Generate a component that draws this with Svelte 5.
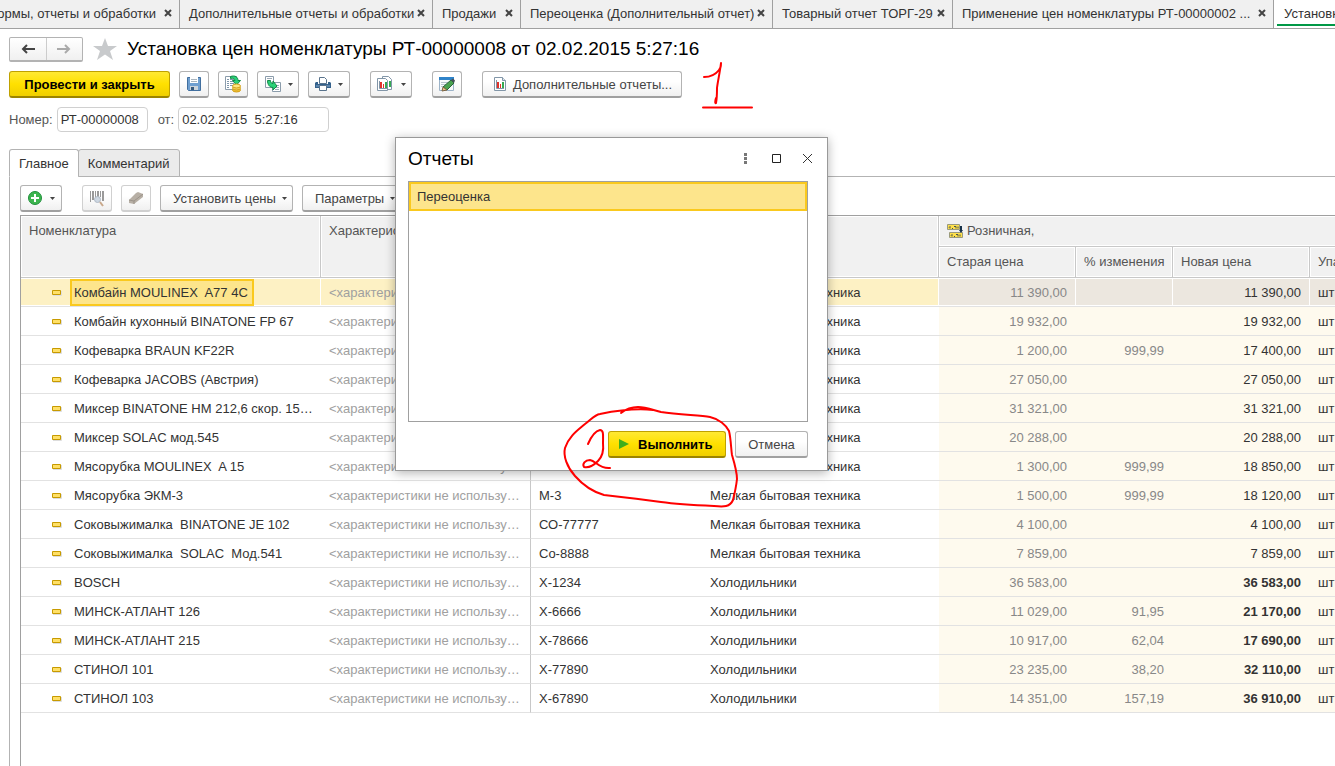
<script lang="ts">
	interface Item {
		name: string;
		code: string;
		group: string;
		oldPrice: string;
		change?: string;
		newPrice: string;
		bold?: boolean;
	}

	const tabs = [
		{ title: 'Печатные формы, отчеты и обработки', width: 180 },
		{ title: 'Дополнительные отчеты и обработки', width: 253 },
		{ title: 'Продажи', width: 88 },
		{ title: 'Переоценка (Дополнительный отчет)', width: 252 },
		{ title: 'Товарный отчет ТОРГ-29', width: 180 },
		{ title: 'Применение цен номенклатуры РТ-00000002 ...', width: 321 }
	];

	const small = 'Мелкая бытовая техника';
	const fridge = 'Холодильники';

	const items: Item[] = [
		{ name: 'Комбайн MOULINEX  A77 4C', code: 'М-77', group: small, oldPrice: '11 390,00', newPrice: '11 390,00' },
		{ name: 'Комбайн кухонный BINATONE FP 67', code: 'FP-67', group: small, oldPrice: '19 932,00', newPrice: '19 932,00' },
		{ name: 'Кофеварка BRAUN KF22R', code: 'KF22R', group: small, oldPrice: '1 200,00', change: '999,99', newPrice: '17 400,00' },
		{ name: 'Кофеварка JACOBS (Австрия)', code: 'J-1', group: small, oldPrice: '27 050,00', newPrice: '27 050,00' },
		{ name: 'Миксер BINATONE HM 212,6 скор. 150 Вт', code: 'HM-212', group: small, oldPrice: '31 321,00', newPrice: '31 321,00' },
		{ name: 'Миксер SOLAC мод.545', code: 'S-545', group: small, oldPrice: '20 288,00', newPrice: '20 288,00' },
		{ name: 'Мясорубка MOULINEX  A 15', code: 'А-15', group: small, oldPrice: '1 300,00', change: '999,99', newPrice: '18 850,00' },
		{ name: 'Мясорубка ЭКМ-3', code: 'М-3', group: small, oldPrice: '1 500,00', change: '999,99', newPrice: '18 120,00' },
		{ name: 'Соковыжималка  BINATONE JE 102', code: 'СО-77777', group: small, oldPrice: '4 100,00', newPrice: '4 100,00' },
		{ name: 'Соковыжималка  SOLAC  Мод.541', code: 'Со-8888', group: small, oldPrice: '7 859,00', newPrice: '7 859,00' },
		{ name: 'BOSCH', code: 'Х-1234', group: fridge, oldPrice: '36 583,00', newPrice: '36 583,00', bold: true },
		{ name: 'МИНСК-АТЛАНТ 126', code: 'Х-6666', group: fridge, oldPrice: '11 029,00', change: '91,95', newPrice: '21 170,00', bold: true },
		{ name: 'МИНСК-АТЛАНТ 215', code: 'Х-78666', group: fridge, oldPrice: '10 917,00', change: '62,04', newPrice: '17 690,00', bold: true },
		{ name: 'СТИНОЛ 101', code: 'Х-77890', group: fridge, oldPrice: '23 235,00', change: '38,20', newPrice: '32 110,00', bold: true },
		{ name: 'СТИНОЛ 103', code: 'Х-67890', group: fridge, oldPrice: '14 351,00', change: '157,19', newPrice: '36 910,00', bold: true }
	];

	let selected = $state(0);
	let number = $state('РТ-00000008');
	let date = $state('02.02.2015  5:27:16');
</script>

{#snippet caret()}
	<svg class="caret" width="5" height="3" viewBox="0 0 5 3"><path d="M0 0h5L2.5 3z" fill="#444" /></svg>
{/snippet}

{#snippet chart()}
	<svg width="16" height="16" viewBox="0 0 16 16">
		<path d="M2.5 1.5h8l3 3v10h-11z" fill="#fff" stroke="#8296a8" />
		<path d="M10.500 1.500v3h3" fill="#dde5ec" stroke="#8296a8" />
		<path d="M4.500 4v8.500H12" fill="none" stroke="#8296a8" />
		<path d="M5 6h2v6H5z" fill="#e0322b" />
		<path d="M8 8h1v4H8z" fill="#e0322b" />
		<path d="M10 6h2v6h-2z" fill="#36a852" />
	</svg>
{/snippet}

<div class="page">
	<nav class="windows">
		{#each tabs as tab, i}
			<div class="window" class:first={i === 0} style:width="{tab.width}px">
				<a href="#{i}">{tab.title}</a>
				<button class="close" aria-label="Закрыть">
					<svg width="8" height="8" viewBox="0 0 8 8"><path d="M1 1l6 6M7 1L1 7" stroke="#444" stroke-width="2" /></svg>
				</button>
			</div>
		{/each}
		<div class="window current">
			<a href="#current">Установка цен номенклатуры РТ-00000008</a>
		</div>
	</nav>

	<header class="title">
		<div class="history">
			<button aria-label="Назад">
				<svg width="14" height="10" viewBox="0 0 14 10"><path d="M14 5H2M6 1L2 5l4 4" fill="none" stroke="#444" stroke-width="2" /></svg>
			</button>
			<button aria-label="Вперед">
				<svg width="14" height="10" viewBox="0 0 14 10"><path d="M0 5h12M8 1l4 4-4 4" fill="none" stroke="#aaa" stroke-width="2" /></svg>
			</button>
		</div>
		<svg class="star" width="24" height="22" viewBox="0 0 24 22">
			<path d="M12 0l3 8h9l-7 5 3 9-8-5.500L4 22l3-9-7-5h9z" fill="#c8cacc" />
		</svg>
		<h1>Установка цен номенклатуры РТ-00000008 от 02.02.2015 5:27:16</h1>
	</header>

	<div class="commands">
		<button class="btn primary post">Провести и закрыть</button>
		<button class="btn icon" aria-label="Записать">
			<svg width="16" height="16" viewBox="0 0 16 16">
				<path d="M1.500 1.500h13v13h-12l-1-1z" fill="#6f9fd0" stroke="#416f9f" />
				<path d="M4 1h8v6H4z" fill="#fff" />
				<path d="M5 3.500h6M5 5.500h6" stroke="#a8b4be" />
				<path d="M4 10h8v4H4z" fill="#cdd4da" />
				<path d="M5 11h3v3H5z" fill="#35587c" />
			</svg>
		</button>
		<button class="btn icon" aria-label="Провести">
			<svg width="18" height="18" viewBox="0 0 18 18">
				<path d="M1.500 1.500h11v13h-11z" fill="#fff" stroke="#8b9cab" />
				<path d="M3 4.500h2M6 4.500h4M3 6.500h2M6 6.500h4M3 8.500h2M6 8.500h4M3 10.500h2M6 10.500h3M3 12.500h2" stroke="#8096aa" />
				<path d="M6.500 1.500C11 0 14 2 14 5.500h2.500l-4 4.500-4-4.500H11C11 4 9 2.500 6.500 3.500z" fill="#2bd178" stroke="#128a45" />
				<ellipse cx="12.500" cy="15" rx="4" ry="2" fill="#f1c339" stroke="#d29d17" />
				<ellipse cx="12.500" cy="13" rx="4" ry="2" fill="#f7d75c" stroke="#d29d17" />
				<ellipse cx="12.500" cy="11" rx="4" ry="2" fill="#ffe680" stroke="#d29d17" />
			</svg>
		</button>
		<button class="btn drop" aria-label="Создать на основании">
			<svg width="17" height="17" viewBox="0 0 17 17">
				<path d="M1.500 .5h8v11h-8zM8.500 6.500h8v9h-8z" fill="#fff" stroke="#8b9cab" />
				<path d="M3 2.500h5M11 9.500h4M12 11.500h3M11 13.500h4" stroke="#9eabb7" />
				<path d="M3.500 4.500h3c0 2 1 3 2.500 3V5l4 5-4 4v-2.500c-3.500 0-5.500-3-5.500-7z" fill="#2bd178" stroke="#128a45" />
			</svg>
			{@render caret()}
		</button>
		<button class="btn drop" aria-label="Печать">
			<svg width="16" height="16" viewBox="0 0 16 16">
				<path d="M4.500 1.500h5l2 2v4h-7z" fill="#fff" stroke="#59738c" />
				<path d="M1 6h2v2h10V6h2l1 1v5H0V7z" fill="#34618c" />
				<path d="M1 10h14" stroke="#84a9cb" />
				<path d="M4.500 9.500h7v5h-7z" fill="#fff" stroke="#59738c" />
			</svg>
			{@render caret()}
		</button>
		<button class="btn drop spaced" aria-label="Отчеты">
			<svg width="18" height="16" viewBox="0 0 18 16">
				<path d="M6.500 .5h6l3 3v10h-9z" fill="#fff" stroke="#8296a8" />
				<path d="M13 5h2v6h-2z" fill="#36a852" />
				<path d="M1.500 2.500h8l2 2v10h-10z" fill="#fff" stroke="#8296a8" />
				<path d="M3.500 5v7.500H11" fill="none" stroke="#8296a8" />
				<path d="M4 6h2v6H4zM7 8h1v4H7z" fill="#e0322b" />
				<path d="M9 6h2v6H9z" fill="#36a852" />
			</svg>
			{@render caret()}
		</button>
		<button class="btn icon spaced" aria-label="Редактировать">
			<svg width="16" height="16" viewBox="0 0 16 16">
				<path d="M.5 1.500h14v13H.5z" fill="#f6f9fb" stroke="#9cb3c8" />
				<path d="M0 1h15v3H0z" fill="#2f83c9" />
				<path d="M2 6.500h7M2 8.500h5M2 10.500h3" stroke="#b7c4ce" />
				<path d="M4 11l8-7 3 3-7 7z" fill="#4aa350" stroke="#28613a" />
				<path d="M12 4l2-1.500 2 2L15 7z" fill="#47525c" />
				<path d="M4 11l4 3-5 1z" fill="#eac48c" stroke="#7b6240" />
			</svg>
		</button>
		<button class="btn report spaced">
			{@render chart()}
			Дополнительные отчеты...
		</button>
	</div>

	<div class="fields">
		<label for="number">Номер:</label>
		<input id="number" class="number" bind:value={number} />
		<label for="date">от:</label>
		<input id="date" class="date" bind:value={date} />
	</div>

	<div class="pages">
		<button class="tab active">Главное</button>
		<button class="tab">Комментарий</button>
	</div>

	<main class="panel">
		<div class="toolbar">
			<button class="btn drop" aria-label="Добавить">
				<svg width="16" height="16" viewBox="0 0 16 16">
					<circle cx="8" cy="8" r="6.500" fill="#3db54f" stroke="#1f8f3b" />
					<path d="M8 4v8M4 8h8" stroke="#fff" stroke-width="2" />
				</svg>
				{@render caret()}
			</button>
			<button class="btn icon spaced" aria-label="Поиск по штрихкоду" disabled>
				<svg width="16" height="17" viewBox="0 0 16 17">
					<path d="M1 1h1v11H1zM3 1h2v9H3zM6 1h1v9H6zM8 1h2v6H8zM11 1h1v6h-1zM13 1h2v10h-2z" fill="#9a9a9a" />
					<circle cx="8.500" cy="9.500" r="3" fill="#cdd7e2" stroke="#b0bac5" />
					<path d="M11 12l3 4" stroke="#c9a98c" stroke-width="2" />
				</svg>
			</button>
			<button class="btn icon" aria-label="Терминал сбора данных" disabled>
				<svg width="16" height="14" viewBox="0 0 16 14">
					<path d="M1 9l7-7 2-1 5 2v3l-9 7-5-1z" fill="#b7afa5" />
					<path d="M1 9l5 1 9-7M6 10v3" fill="none" stroke="#9c948a" />
				</svg>
			</button>
			<button class="btn text">Установить цены {@render caret()}</button>
			<button class="btn text">Параметры {@render caret()}</button>
		</div>

		<div class="grid">
			<table>
				<colgroup>
					<col class="c-name" />
					<col class="c-feature" />
					<col class="c-code" />
					<col class="c-group" />
					<col class="c-price" />
					<col class="c-change" />
					<col class="c-price" />
					<col />
				</colgroup>
				<thead>
					<tr>
						<th rowspan="2">Номенклатура</th>
						<th rowspan="2">Характеристика</th>
						<th rowspan="2">Артикул</th>
						<th rowspan="2">Группа</th>
						<th colspan="4">
							<span class="kind">
								<svg width="16" height="16" viewBox="0 0 16 16">
									<path d="M.5 1.500h12v5H.5z" fill="#ffe04a" stroke="#9a9a7c" />
									<path d="M2.500 9.500h13v5h-13z" fill="#ffe04a" stroke="#9a9a7c" />
									<path d="M2 4.500l1-1v2M5 5.500h1M7 3.500h2v2M11 3.500v2M4 12.500l1-1v2M7 13.500h1M9 11.500h2v2M13 11.500v2" fill="none" stroke="#49544c" />
									<path d="M13 3h2v4h1l-2 3-2-3h1z" fill="#17324a" />
								</svg>
								Розничная,
							</span>
						</th>
					</tr>
					<tr>
						<th>Старая цена</th>
						<th>% изменения</th>
						<th>Новая цена</th>
						<th>Упаковка</th>
					</tr>
				</thead>
				<tbody>
					{#each items as item, i}
						<tr class:selected={i === selected} onclick={() => (selected = i)}>
							<td class="name">
								<div>
									<svg width="10" height="8" viewBox="0 0 10 8">
										<path d="M1 7.500h8.500V3" fill="none" stroke="#ddd" />
										<path d="M.5 2.500h8v4h-8z" fill="#ffe067" stroke="#c79a00" />
									</svg>
									<span>{item.name}</span>
								</div>
							</td>
							<td class="feature">&lt;характеристики не используются&gt;</td>
							<td>{item.code}</td>
							<td>{item.group}</td>
							<td class="price muted">{item.oldPrice}</td>
							<td class="price muted">{item.change ?? ''}</td>
							<td class="price" class:bold={item.bold}>{item.newPrice}</td>
							<td class="unit">шт</td>
						</tr>
					{/each}
				</tbody>
			</table>
		</div>
	</main>

	<div class="dialog" role="dialog" aria-labelledby="dialog-title">
		<div class="dialog-head">
			<h2 id="dialog-title">Отчеты</h2>
			<button aria-label="Еще">
				<svg width="12" height="12" viewBox="0 0 12 12"><path d="M4 0h3v3H4zM4 4h3v3H4zM4 8h3v3H4z" fill="#777" /></svg>
			</button>
			<button aria-label="Развернуть">
				<svg width="12" height="12" viewBox="0 0 12 12"><path d="M1.500 1.500h8v8h-8z" fill="none" stroke="#222" /></svg>
			</button>
			<button aria-label="Закрыть">
				<svg width="12" height="12" viewBox="0 0 12 12"><path d="M1 1l9 9M10 1l-9 9" stroke="#333" /></svg>
			</button>
		</div>
		<div class="list" role="listbox" aria-label="Отчеты">
			<div class="option" role="option" aria-selected="true" tabindex="0">Переоценка</div>
		</div>
		<div class="dialog-foot">
			<button class="btn primary run">
				<svg width="10" height="10" viewBox="0 0 10 10"><path d="M0 0l10 5-10 5z" fill="#3fae1c" /></svg>
				Выполнить
			</button>
			<button class="btn cancel">Отмена</button>
		</div>
	</div>

	<!-- hand-drawn step marks -->
	<svg class="marks" width="800" height="520" viewBox="0 0 800 520">
		<path d="M704 77C711 77 716 74 719 70C721 68 721 65 721 63C720 72 718 80 717 88C717 94 717 98 716 103C715 104 715 101 716 98" />
		<path d="M703 107.500H752" />
		<path d="M621 413C626 409 632 407 638 407C645 407 650 409 661 412C680 415 700 415 710 417C719 419 726 425 729 431C731 439 731 449 732 455C735 465 737 472 737 479C736 488 734 496 733 500C730 507 724 507 714 506C690 505 675 504 661 502C640 499 622 497 604 495C590 491 582 484 575 476C567 467 563 456 565 448C569 436 578 430 585 424C591 420 594 415 600 414C615 411 635 408 653 410" />
		<path d="M588 444C591 437 595 431 600 430C604 430 603 436 603 443C604 452 602 457 598 461C593 466 588 468 584 467C582 464 585 460 590 460C596 461 599 469 610 468" />
	</svg>
</div>

<style>
	:global(body) {
		overflow: hidden;
		background: #fff;
	}

	.page {
		position: relative;
		display: flex;
		flex-direction: column;
		min-height: 100vh;
		overflow: hidden;
		font: 13px/15px 'Liberation Sans', Arial, sans-serif;
		color: #333;
	}

	button,
	input {
		font: inherit;
		color: inherit;
		box-sizing: border-box;
	}

	button {
		margin: 0;
		padding: 0;
		border: 0;
		background: none;
	}

	svg {
		display: block;
		flex: none;
	}

	.windows {
		display: flex;
		height: 28px;
		border-bottom: 1px solid #a0a0a0;
		background: #f0f0f0;
	}

	.window {
		display: flex;
		flex: none;
		align-items: center;
		justify-content: space-between;
		box-sizing: border-box;
		padding: 0 7px 2px 9px;
		border-right: 1px solid #a0a0a0;
		white-space: nowrap;

		a {
			color: #333;
			text-decoration: none;
		}

		&.first {
			gap: 8px;
			justify-content: flex-end;
			overflow: hidden;
		}

		&.current {
			flex: 1 0 0;
			min-width: 0;
			height: 26px;
			padding: 2px 0 0 7px;
			margin-left: 3px;
			border-right: 0;
			border-bottom: 2px solid #009846;
			background: #fff;
			box-shadow: -3px 0 #fff, 0 2px #fff, -3px 2px #fff;
		}
	}

	.title {
		display: flex;
		align-items: center;
		gap: 10px;
		height: 24px;
		margin: 8px 9px 0;

		h1 {
			margin: 0;
			font-size: 19px;
			line-height: 24px;
			font-weight: 400;
			color: #000;
			white-space: nowrap;
		}
	}

	.history {
		display: flex;
		box-sizing: border-box;
		width: 74px;
		height: 25px;
		border: 1px solid #b3b3b3;
		border-bottom-width: 2px;
		border-radius: 2px;
		background: linear-gradient(#fff, #f0f0f0);

		button {
			display: flex;
			flex: 1;
			align-items: center;
			justify-content: center;

			& + button {
				border-left: 1px solid #ccc;
			}
		}
	}

	.btn {
		display: flex;
		align-items: center;
		justify-content: center;
		height: 27px;
		border: 1px solid #b3b3b3;
		border-bottom: 2px solid #a0a0a0;
		border-radius: 3px;
		background: linear-gradient(#fff 40%, #f0f0f0);
		color: #444;
		white-space: nowrap;

		&:disabled {
			border-color: #d0d0d0;
		}

		&.icon {
			width: 30px;
		}

		&.drop {
			gap: 7px;
			width: 42px;
		}

		&.text {
			gap: 6px;
			padding: 0 5px 0 12px;
		}

		&.primary {
			border-color: #bfa100;
			border-bottom-color: #9c8400;
			background: linear-gradient(#ffe934, #ffe000 50%, #f0cf00);
			color: #000;
			font-weight: 700;
		}

		&.post {
			width: 161px;
		}

		&.report {
			gap: 5px;
			width: 200px;
		}
	}

	.commands,
	.toolbar {
		display: flex;
		gap: 9px;

		.spaced {
			margin-left: 11px;
		}
	}

	.commands {
		margin: 10px 9px 0;
	}

	.fields {
		display: flex;
		align-items: center;
		margin: 9px 9px 0;
		color: #555;

		input {
			height: 25px;
			padding: 0 3px;
			border: 1px solid #d0d0d0;
			border-radius: 4px;
			color: #333;
		}

		.number {
			width: 91px;
			margin: 0 10px 0 4px;
		}

		.date {
			width: 151px;
			margin-left: 4px;
		}
	}

	.pages {
		display: flex;
		margin: 17px 0 -1px 9px;
		z-index: 1;
	}

	.tab {
		height: 28px;
		padding: 0 9px;
		border: 1px solid #b3b3b3;
		border-radius: 3px 3px 0 0;
		background: #ebebeb;

		& + .tab {
			margin-left: -1px;
		}

		&.active {
			border-bottom-color: #fff;
			background: #fff;
		}
	}

	.panel {
		display: flex;
		flex: 1;
		flex-direction: column;
		margin-left: 9px;
		padding: 8px 0 0 10px;
		border: solid #b3b3b3;
		border-width: 1px 0 0 1px;
	}

	.grid {
		flex: 1;
		margin-top: 3px;
		border: solid #a0a0a0;
		border-width: 1px 0 0 1px;
		overflow: hidden;
	}

	table {
		width: 100%;
		min-width: 1360px;
		table-layout: fixed;
		border-spacing: 0;
	}

	.c-name {
		width: 300px;
	}

	.c-feature {
		width: 210px;
	}

	.c-code {
		width: 171px;
	}

	.c-group {
		width: 237px;
	}

	.c-price {
		width: 137px;
	}

	.c-change {
		width: 97px;
	}

	th {
		box-sizing: border-box;
		height: 31px;
		padding: 7px 8px;
		border: solid #c8c8c8;
		border-width: 0 1px 1px 0;
		background: #f1f1f1;
		box-shadow: inset 0 0 0 1px #fff;
		color: #555;
		font-weight: 400;
		text-align: left;
		vertical-align: top;
		white-space: nowrap;
	}

	.kind {
		display: flex;
		align-items: center;
		gap: 4px;
		height: 15px;
	}

	td {
		box-sizing: border-box;
		height: 29px;
		padding: 0 8px;
		border-bottom: 1px solid #e2e2e2;
		overflow: hidden;
		text-overflow: ellipsis;
		white-space: pre;
	}

	.name {
		padding: 0 1px 0 31px;

		div {
			display: flex;
			align-items: center;
			gap: 8px;
		}

		span {
			min-width: 0;
			padding: 4px 4px 4px 2px;
			border: 2px solid transparent;
			overflow: hidden;
			text-overflow: ellipsis;
		}
	}

	.feature {
		color: #a0a0a0;
		border-right: 1px solid #c8c8c8;
		padding-right: 8px;
	}

	.price,
	.unit {
		background: #fefaee;
	}

	.price {
		padding-right: 9px;
		text-align: right;
	}

	.muted {
		color: #888;
	}

	.bold {
		font-weight: 700;
	}

	.selected td {
		background: #fdf1c4;
		box-shadow: inset -1px 0 #fff, inset 0 1px #fff, inset 0 -1px #fff;

		&.price,
		&.unit {
			background: #ece7df;
		}
	}

	.selected .name span {
		border-color: #fac91e;
		background: #fde58c;
	}

	.dialog {
		position: absolute;
		top: 137px;
		left: 395px;
		z-index: 2;
		box-sizing: border-box;
		width: 433px;
		padding: 8px 19px 12px 12px;
		border: 1px solid #999;
		background: #fff;
		box-shadow: 0 2px 10px rgba(0, 0, 0, 0.3);
	}

	.dialog-head {
		display: flex;
		align-items: center;
		gap: 19px;
		height: 25px;
		margin-right: -6px;

		h2 {
			flex: 1;
			margin: 0;
			font-size: 19px;
			line-height: 24px;
			font-weight: 400;
			color: #000;
		}
	}

	.list {
		box-sizing: border-box;
		height: 241px;
		margin-top: 10px;
		border: 1px solid #a0a0a0;
	}

	.option {
		padding: 5px 6px;
		border: 2px solid #fac91e;
		background: #fde58c;
	}

	.dialog-foot {
		display: flex;
		justify-content: flex-end;
		gap: 9px;
		margin-top: 9px;
	}

	.btn.run {
		gap: 9px;
		justify-content: flex-start;
		width: 118px;
		padding-left: 10px;
	}

	.cancel {
		width: 73px;
	}

	.marks {
		position: absolute;
		top: 0;
		left: 0;
		z-index: 3;
		pointer-events: none;

		path {
			fill: none;
			stroke: #f00;
			stroke-width: 2;
			stroke-linecap: round;
			stroke-linejoin: round;
		}
	}
</style>
